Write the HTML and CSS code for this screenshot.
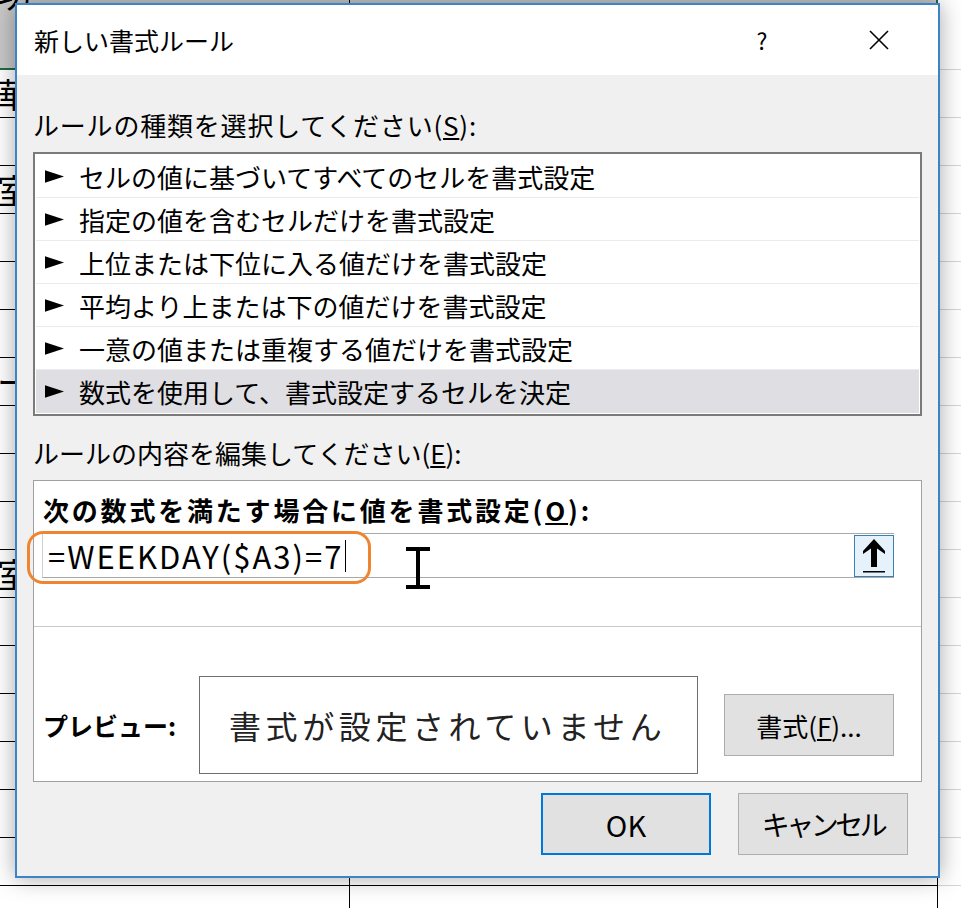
FILE: index.html
```html
<!DOCTYPE html>
<html lang="ja">
<head>
    <meta charset="UTF-8">
    <meta name="viewport" content="width=device-width, initial-scale=1.0">
    <title>新しい書式ルール</title>
    <link rel="stylesheet" href="styles.css">
</head>
<body>
    <!-- spreadsheet behind the dialog -->
    <div class="sheet">
        <div class="row row-head"><div class="cell col-a"><span class="cell-text head-text">功</span></div><div class="cell col-b"></div><div class="cell col-c"></div></div>
        <div class="row"><div class="cell col-a"><span class="cell-text">華</span></div><div class="cell col-b"></div><div class="cell col-c"></div></div>
        <div class="row"><div class="cell col-a"></div><div class="cell col-b"></div><div class="cell col-c"></div></div>
        <div class="row"><div class="cell col-a"><span class="cell-text">室</span></div><div class="cell col-b"></div><div class="cell col-c"></div></div>
        <div class="row"><div class="cell col-a"></div><div class="cell col-b"></div><div class="cell col-c"></div></div>
        <div class="row"><div class="cell col-a"></div><div class="cell col-b"></div><div class="cell col-c"></div></div>
        <div class="row"><div class="cell col-a"></div><div class="cell col-b"></div><div class="cell col-c"></div></div>
        <div class="row"><div class="cell col-a"><span class="cell-text">ー</span></div><div class="cell col-b"></div><div class="cell col-c"></div></div>
        <div class="row"><div class="cell col-a"></div><div class="cell col-b"></div><div class="cell col-c"></div></div>
        <div class="row"><div class="cell col-a"></div><div class="cell col-b"></div><div class="cell col-c"></div></div>
        <div class="row"><div class="cell col-a"></div><div class="cell col-b"></div><div class="cell col-c"></div></div>
        <div class="row"><div class="cell col-a"><span class="cell-text">室</span></div><div class="cell col-b"></div><div class="cell col-c"></div></div>
        <div class="row"><div class="cell col-a"></div><div class="cell col-b"></div><div class="cell col-c"></div></div>
        <div class="row"><div class="cell col-a"></div><div class="cell col-b"></div><div class="cell col-c"></div></div>
        <div class="row"><div class="cell col-a"></div><div class="cell col-b"></div><div class="cell col-c"></div></div>
        <div class="row"><div class="cell col-a"></div><div class="cell col-b"></div><div class="cell col-c"></div></div>
        <div class="row"><div class="cell col-a"></div><div class="cell col-b"></div><div class="cell col-c"></div></div>
        <div class="row"><div class="cell col-a"></div><div class="cell col-b"></div><div class="cell col-c"></div></div>
        <div class="row"><div class="cell col-a"></div><div class="cell col-b"></div><div class="cell col-c"></div></div>
    </div>

    <div class="dialog">
        <div class="titlebar">
            <div class="title">新しい書式ルール</div>
            <div class="help">?</div>
            <div class="close">
                <svg width="20" height="20" viewBox="0 0 20 20"><path d="M1 1 L19 19 M19 1 L1 19" stroke="#000" stroke-width="1.6" fill="none"/></svg>
            </div>
        </div>

        <div class="dialog-body">
            <div class="group-label first">ルールの種類を選択してください(<u>S</u>):</div>
            <div class="rule-list">
                <div class="rule-item"><svg class="arrow" viewBox="0 0 18 12"><polygon points="0,0 18,6 0,12"/></svg>セルの値に基づいてすべてのセルを書式設定</div>
                <div class="rule-item"><svg class="arrow" viewBox="0 0 18 12"><polygon points="0,0 18,6 0,12"/></svg>指定の値を含むセルだけを書式設定</div>
                <div class="rule-item"><svg class="arrow" viewBox="0 0 18 12"><polygon points="0,0 18,6 0,12"/></svg>上位または下位に入る値だけを書式設定</div>
                <div class="rule-item"><svg class="arrow" viewBox="0 0 18 12"><polygon points="0,0 18,6 0,12"/></svg>平均より上または下の値だけを書式設定</div>
                <div class="rule-item"><svg class="arrow" viewBox="0 0 18 12"><polygon points="0,0 18,6 0,12"/></svg>一意の値または重複する値だけを書式設定</div>
                <div class="rule-item selected"><svg class="arrow" viewBox="0 0 18 12"><polygon points="0,0 18,6 0,12"/></svg>数式を使用して、書式設定するセルを決定</div>
            </div>

            <div class="group-label second">ルールの内容を編集してください(<u>E</u>):</div>
            <div class="edit-panel">
                <div class="formula-label">次の数式を満たす場合に値を書式設定(<u>O</u>):</div>
                <div class="formula">
                    <span class="formula-text">=WEEKDAY($A3)=7</span><span class="caret"></span>
                    <div class="collapse-btn">
                        <svg width="38" height="40" viewBox="0 0 38 40"><polygon points="19,3 30,15 30,18 22,12.5 22,31 16,31 16,12.5 8,18 8,15"/><rect x="8" y="35" width="22" height="1.5"/></svg>
                    </div>
                    <div class="highlight"></div>
                    <svg class="ibeam" width="26" height="44" viewBox="0 0 26 44"><path d="M1 1 H25 V5 H15 V39 H25 V43 H1 V39 H11 V5 H1 Z"/></svg>
                </div>
                <div class="separator"></div>
                <div class="preview-row">
                    <div class="preview-label">プレビュー:</div>
                    <div class="preview-box">書式が設定されていません</div>
                    <div class="btn format-btn">書式(<u>F</u>)...</div>
                </div>
            </div>

            <div class="button-row">
                <div class="btn ok-btn">OK</div>
                <div class="btn cancel-btn">キャンセル</div>
            </div>
        </div>
    </div>
</body>
</html>
```

FILE: styles.css
```css
* {
    box-sizing: border-box;
}

body {
    margin: 0;
    background-color: #fff;
    font-family: "Noto Sans CJK JP", "Noto Sans", sans-serif;
    color: #000;
    overflow: hidden;
}

/* Sheet behind */
.sheet {
    width: 961px;
    height: 908px;
    overflow: hidden;
}

.row {
    display: flex;
    height: 48px;
}

.row-head {
    height: 70px;
}

.cell {
    height: 100%;
    border-bottom: 1px solid #000;
    overflow: hidden;
}

.col-a {
    width: 350px;
    border-right: 1px solid #000;
}

.col-b {
    width: 588px;
    border-right: 1px solid #000;
}

.col-c {
    flex: 1;
    border-bottom-color: #d4d4d4;
}

.row-head .col-a,
.row-head .col-b {
    background-color: #c8c8c8;
    border-bottom: 2px solid #1e6b45;
}

.row-head .col-b {
    border-right: 2px solid #1e6b45;
}

.row-head .col-c {
    border-bottom-color: #d4d4d4;
}

.cell-text {
    display: block;
    font-size: 34px;
    line-height: 48px;
    margin-left: -3px;
}

.head-text {
    margin-top: -30px;
}

/* Dialog */
.dialog {
    position: absolute;
    left: 15px;
    top: 3px;
    width: 925px;
    height: 875px;
    border: 2px solid #3b84c8;
    background-color: #f0f0f0;
    box-shadow: 0 0 22px rgba(0, 0, 0, 0.35);
}

.titlebar {
    height: 70px;
    background-color: #fff;
    display: flex;
    align-items: center;
    padding-left: 17px;
}

.title {
    flex: 1;
    font-size: 25px;
}

.help {
    width: 40px;
    text-align: center;
    font-size: 23px;
}

.close {
    width: 40px;
    height: 20px;
    margin-left: 77px;
    margin-right: 39px;
    display: flex;
    justify-content: center;
}

.dialog-body {
    padding: 33px 16px 0 16px;
}

.group-label {
    font-size: 26px;
    line-height: 34px;
    height: 34px;
    white-space: nowrap;
}

.group-label.first {
    letter-spacing: 0.8px;
}

.group-label.second {
    margin-top: 20px;
}

/* Rule list */
.rule-list {
    margin-top: 10px;
    border: 2px solid #7a7a7a;
    background-color: #fff;
    padding: 1px;
}

.rule-item {
    height: 43px;
    display: flex;
    align-items: center;
    padding-left: 9px;
    font-size: 26px;
    border-bottom: 1px solid #ebebeb;
    white-space: nowrap;
}

.rule-item:last-child {
    border-bottom: none;
}

.rule-item.selected {
    background-color: #dedee3;
}

.arrow {
    width: 19px;
    height: 13px;
    margin-right: 15px;
    flex-shrink: 0;
}

/* Edit panel */
.edit-panel {
    margin-top: 10px;
    background-color: #fff;
    border: 1px solid #a0a0a0;
    padding: 13px 0 7px 0;
}

.formula-label {
    font-size: 26px;
    font-weight: bold;
    letter-spacing: 2.8px;
    line-height: 32px;
    height: 32px;
    padding-left: 9px;
    white-space: nowrap;
}

.formula {
    position: relative;
    height: 45px;
    margin: 7px 27px 0 8px;
    border-top: 1px solid #a9a9a9;
    border-bottom: 1px solid #a9a9a9;
    border-left: 1px solid #d0d0d0;
    display: flex;
    align-items: center;
    padding-left: 5px;
}

.formula-text {
    font-size: 31px;
    letter-spacing: 2px;
    line-height: 36px;
}

.caret {
    width: 1px;
    height: 32px;
    background-color: #000;
    margin-left: 2px;
}

.collapse-btn {
    margin-left: auto;
    width: 40px;
    height: 42px;
    border: 1px solid #3c7fb1;
    background-color: #e5f1fb;
}

.highlight {
    position: absolute;
    left: -16px;
    top: -3px;
    width: 344px;
    height: 53px;
    border: 3px solid #ef8531;
    border-radius: 16px;
}

.ibeam {
    position: absolute;
    left: 362px;
    top: 12px;
}

.separator {
    margin-top: 48px;
    height: 1px;
    background-color: #c8c8c8;
}

.preview-row {
    margin-top: 49px;
    display: flex;
    align-items: center;
}

.preview-label {
    width: 165px;
    padding-left: 9px;
    font-size: 25px;
    font-weight: bold;
    white-space: nowrap;
}

.preview-box {
    width: 499px;
    height: 98px;
    border: 1px solid #6e6e6e;
    display: flex;
    align-items: center;
    padding-left: 29px;
    font-size: 32px;
    letter-spacing: 4.6px;
    color: #222;
    white-space: nowrap;
}

/* Buttons */
.btn {
    width: 170px;
    height: 62px;
    background-color: #e1e1e1;
    border: 1px solid #adadad;
    display: flex;
    align-items: center;
    justify-content: center;
    font-size: 26px;
    white-space: nowrap;
}

.format-btn {
    margin-left: 26px;
}

.button-row {
    margin-top: 11px;
    margin-right: 14px;
    display: flex;
    justify-content: flex-end;
    gap: 27px;
}

.ok-btn {
    border: 2px solid #0078d7;
    font-size: 29px;
}

.cancel-btn {
    font-size: 28px;
    letter-spacing: -3.5px;
}
```
